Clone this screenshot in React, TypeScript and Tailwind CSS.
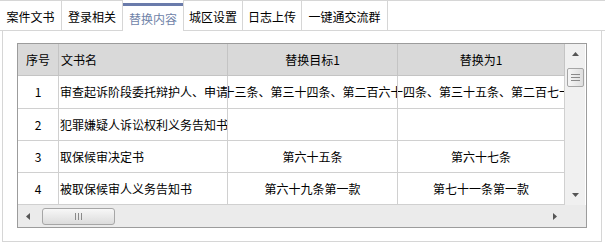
const tabs = [
  { label: '案件文书', w: 'w-[62px]' },
  { label: '登录相关', w: 'w-[61px]' },
  { label: '替换内容', w: 'w-[61px]', active: true },
  { label: '城区设置', w: 'w-[59px]' },
  { label: '日志上传', w: 'w-[59px]' },
  { label: '一键通交流群', w: 'w-[86px]' },
];

const rows = [
  {
    no: '1',
    name: '审查起诉阶段委托辩护人、申请法律援助告知书',
    target: '第三十三条、第三十四条、第二百六十四条',
    replace: '第三十四条、第三十五条、第二百七十四条',
    h: 'h-[33px]',
  },
  { no: '2', name: '犯罪嫌疑人诉讼权利义务告知书', target: '', replace: '', h: 'h-[32px]' },
  { no: '3', name: '取保候审决定书', target: '第六十五条', replace: '第六十七条', h: 'h-[32px]' },
  { no: '4', name: '被取保候审人义务告知书', target: '第六十九条第一款', replace: '第七十一条第一款', h: 'h-[32px]' },
];

function Arrow({ dir }: { dir: 'up' | 'down' | 'left' | 'right' }) {
  const pts = {
    up: '0,4 3.5,0 7,4',
    down: '0,0 7,0 3.5,4',
    left: '4,0 4,7 0,3.5',
    right: '0,0 4,3.5 0,7',
  }[dir];
  const vertical = dir === 'up' || dir === 'down';
  return (
    <svg width={vertical ? 7 : 4} height={vertical ? 4 : 7} viewBox={vertical ? '0 0 7 4' : '0 0 4 7'}>
      <polygon points={pts} fill="#555" />
    </svg>
  );
}

function VScroll() {
  return (
    <div className="w-[20px] h-full bg-[#f0f0f0] flex flex-col items-center">
      <div className="h-[20px] w-full flex items-center justify-center">
        <Arrow dir="up" />
      </div>
      <div className="mt-[4px] h-[19px] w-[17px] rounded-[2px] border border-[#a6a6a6] bg-gradient-to-r from-[#f6f6f6] to-[#dedede] flex flex-col items-center justify-center gap-[2px]">
        <div className="h-px w-[9px] bg-[#8a8a8a]" />
        <div className="h-px w-[9px] bg-[#8a8a8a]" />
        <div className="h-px w-[9px] bg-[#8a8a8a]" />
      </div>
      <div className="flex-1" />
      <div className="h-[20px] w-full flex items-center justify-center">
        <Arrow dir="down" />
      </div>
    </div>
  );
}

function HScroll() {
  return (
    <div className="h-[22px] flex bg-[#ebebeb]">
      <div className="w-[547px] flex items-center">
        <div className="w-[20px] h-full flex items-center justify-center">
          <Arrow dir="left" />
        </div>
        <div className="ml-[4px] w-[73px] h-[17px] rounded-[3px] border border-[#a6a6a6] bg-gradient-to-b from-[#f7f7f7] to-[#dcdcdc] flex items-center justify-center gap-[2px]">
          <div className="w-px h-[7px] bg-[#8a8a8a]" />
          <div className="w-px h-[7px] bg-[#8a8a8a]" />
          <div className="w-px h-[7px] bg-[#8a8a8a]" />
        </div>
        <div className="flex-1" />
        <div className="w-[20px] h-full flex items-center justify-center">
          <Arrow dir="right" />
        </div>
      </div>
      <div className="flex-1" />
    </div>
  );
}

export default function App() {
  return (
    <div className="w-[605px] h-[246px] bg-white text-[12px] leading-none text-black font-['Noto_Sans_CJK_SC','Microsoft_YaHei',sans-serif]">
      <div className="flex h-[31px]">
        {tabs.map((t) =>
          t.active ? (
            <div
              key={t.label}
              className={`${t.w} h-full pt-[3px] border-r border-[#d6d6d6] bg-white flex flex-col`}
            >
              <div className="h-[3px] bg-[#6a7bab]" />
              <div className="flex-1 flex items-center justify-center text-[#7083a8]">{t.label}</div>
            </div>
          ) : (
            <div
              key={t.label}
              className={`${t.w} h-full border-t border-r border-b border-[#d6d6d6] bg-white flex items-center justify-center pt-[2px]`}
            >
              {t.label}
            </div>
          )
        )}
        <div className="flex-1 h-full border-t border-b border-[#d6d6d6]" />
      </div>

      <div className="ml-[2px] w-[600px] h-[211px] border-x border-b border-[#d6d6d6] pl-[14px] pt-[12px]">
        <div className="w-[570px] h-[185px] border border-[#9c9c9c] flex flex-col">
          <div className="flex h-[161px]">
            <div className="w-[547px] flex flex-col">
              <div className="flex h-[32px] bg-[#d9d9d9] border-b border-[#c4c4c4]">
                <div className="w-[41px] border-r border-[#c4c4c4] flex items-center justify-center">序号</div>
                <div className="w-[169px] border-r border-[#c4c4c4] flex items-center pl-[2px]">文书名</div>
                <div className="w-[170px] border-r border-[#c4c4c4] flex items-center justify-center">替换目标1</div>
                <div className="w-[167px] border-r border-[#c4c4c4] flex items-center justify-center">替换为1</div>
              </div>
              {rows.map((r) => (
                <div key={r.no} className={`flex ${r.h} border-b border-[#d0d0d0] bg-white`}>
                  <div className="w-[41px] border-r border-[#d0d0d0] flex items-center justify-center">{r.no}</div>
                  <div className="w-[169px] border-r border-[#d0d0d0] flex items-center pl-px overflow-hidden whitespace-nowrap">
                    {r.name}
                  </div>
                  <div className="w-[170px] border-r border-[#d0d0d0] flex items-center justify-center overflow-hidden whitespace-nowrap">
                    <span className="shrink-0">{r.target}</span>
                  </div>
                  <div className="w-[167px] border-r border-[#d0d0d0] flex items-center justify-center overflow-hidden whitespace-nowrap">
                    <span className="shrink-0">{r.replace}</span>
                  </div>
                </div>
              ))}
            </div>
            <VScroll />
          </div>
          <HScroll />
        </div>
      </div>
    </div>
  );
}
